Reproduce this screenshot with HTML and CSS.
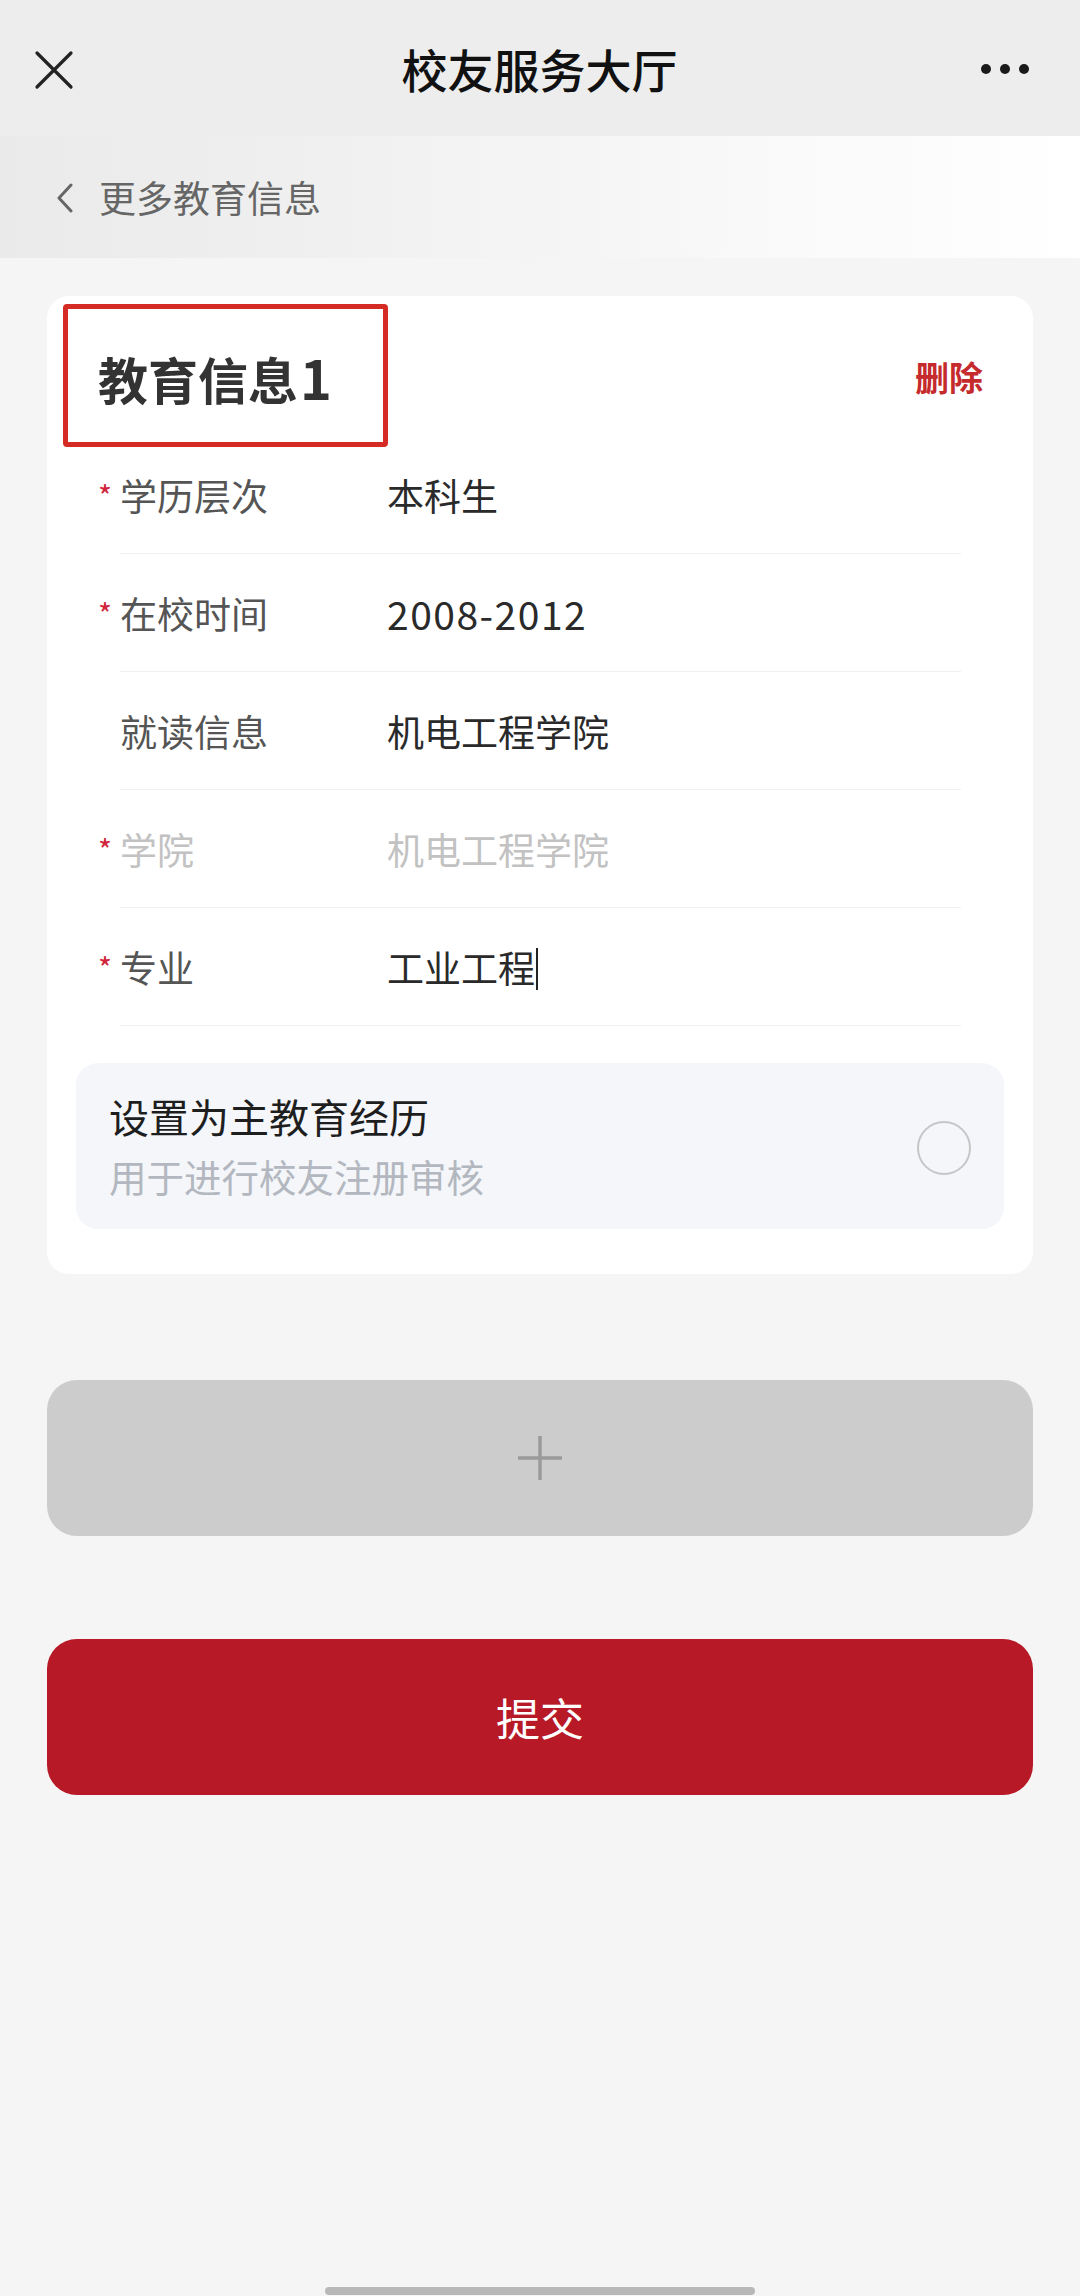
FILE: index.html
```html
<html>
<head>
<meta charset="utf-8">
<meta name="viewport" content="width=device-width, initial-scale=1">
<title>校友服务大厅</title>
<link rel="stylesheet" href="styles.css">
</head>
<body>

<div class="navbar">
	<svg class="nav-close" width="40" height="40" viewBox="0 0 40 40">
		<path d="M3 3 L37 37 M37 3 L3 37" stroke="#222" stroke-width="3.2" stroke-linecap="round" fill="none"/>
	</svg>
	<div class="nav-title">校友服务大厅</div>
	<div class="nav-more"><i></i><i></i><i></i></div>
</div>

<div class="subbar">
	<svg class="back" width="20" height="30" viewBox="0 0 20 30">
		<path d="M16 2 L4 15 L16 28" stroke="#666" stroke-width="3" fill="none" stroke-linecap="round" stroke-linejoin="round"/>
	</svg>
	<span>更多教育信息</span>
</div>

<div id="content">

	<div class="card">
		<div class="mark"></div>
		<div class="card-head">
			<div class="card-title">教育信息<span class="num">1</span></div>
			<div class="delete">删除</div>
		</div>

		<div class="row">
			<div class="label"><span class="req">*</span>学历层次</div>
			<div class="value">本科生</div>
		</div>
		<div class="row">
			<div class="label"><span class="req">*</span>在校时间</div>
			<div class="value digits">2008-2012</div>
		</div>
		<div class="row">
			<div class="label">就读信息</div>
			<div class="value">机电工程学院</div>
		</div>
		<div class="row disabled">
			<div class="label"><span class="req">*</span>学院</div>
			<div class="value">机电工程学院</div>
		</div>
		<div class="row">
			<div class="label"><span class="req">*</span>专业</div>
			<div class="value">工业工程<span class="caret"></span></div>
		</div>

		<div class="main-edu">
			<div>
				<div class="main-edu-title">设置为主教育经历</div>
				<div class="main-edu-sub">用于进行校友注册审核</div>
			</div>
			<div class="radio"></div>
		</div>
	</div>

	<div class="add-btn">
		<svg width="48" height="48" viewBox="0 0 48 48">
			<path d="M24 2 V46 M2 24 H46" stroke="#9a9a9a" stroke-width="3.5" fill="none"/>
		</svg>
	</div>

	<div class="submit-btn">提交</div>

</div>

<div class="home-bar"></div>

</body>
</html>
```

FILE: styles.css
```css
body {
	margin: 0;
	background-color: #f5f5f5;
	font-family: "Noto Sans CJK SC", "Noto Sans", sans-serif;
	min-height: 2296px;
	position: relative;
}

.navbar {
	height: 136px;
	background-color: #ededed;
	display: flex;
	align-items: center;
	justify-content: space-between;
	padding: 0 51px 0 34px;
}

.nav-close {
	margin-top: 3px;
}

.nav-title {
	font-size: 46px;
	font-weight: 500;
	color: #111;
	padding-left: 24px;
}

.nav-more {
	display: flex;
	gap: 9px;
	width: 48px;
	padding-top: 2px;
}

.nav-more i {
	width: 10px;
	height: 10px;
	border-radius: 50%;
	background-color: #1a1a1a;
}

.subbar {
	height: 122px;
	display: flex;
	align-items: center;
	padding-left: 55px;
	background: linear-gradient(to right, #eaeaea 0%, #f1f1f1 35%, #f9f9f9 70%, #ffffff 100%);
	color: #666;
	font-size: 37px;
}

.subbar .back {
	margin-right: 24px;
	margin-top: 2px;
}

#content {
	padding: 38px 47px 0 47px;
}

.card {
	position: relative;
	background-color: #fff;
	border-radius: 22px;
	padding: 0 0 45px 0;
}

/* red highlight frame over the heading */
.mark {
	position: absolute;
	left: 16px;
	top: 8px;
	width: 315px;
	height: 133px;
	border: 5px solid #d42b24;
	border-radius: 4px;
}

.card-head {
	display: flex;
	align-items: center;
	justify-content: space-between;
	height: 140px;
	padding: 0 50px 0 51px;
}

.card-title {
	font-size: 50px;
	font-weight: 700;
	color: #333;
	padding-top: 20px;
}

.card-title .num {
	font-size: 54px;
	margin-left: 2px;
}

.delete {
	font-size: 34px;
	font-weight: 700;
	color: #c52a2d;
	padding-top: 20px;
}

.row {
	display: flex;
	align-items: center;
	height: 117px;
	margin: 0 72px 0 73px;
	border-bottom: 1px solid #f0f0f0;
	font-size: 37px;
}

.label {
	width: 267px;
	color: #555;
	line-height: 58px;
}

.req {
	display: inline-block;
	width: 22px;
	margin-left: -22px;
	color: #d0253a;
	font-size: 30px;
	vertical-align: top;
	line-height: 58px;
}

.value {
	color: #2a2a2a;
	display: flex;
	align-items: center;
	line-height: 58px;
}

.value.digits {
	font-size: 39px;
	letter-spacing: 1.5px;
}

.disabled .label,
.disabled .value {
	color: #c2c2c2;
}

.caret {
	width: 2px;
	height: 42px;
	background-color: #222;
	margin-left: 1px;
	margin-top: 4px;
}

.main-edu {
	margin: 37px 29px 0 29px;
	height: 166px;
	background-color: #f4f6fa;
	border-radius: 22px;
	display: flex;
	align-items: center;
	justify-content: space-between;
	padding: 0 33px 0 33px;
}

.main-edu-title {
	font-size: 40px;
	color: #1e1e1e;
	line-height: 56px;
}

.main-edu-sub {
	font-size: 37.5px;
	color: #b3b7bf;
	line-height: 56px;
	margin-top: 4px;
}

.radio {
	width: 50px;
	height: 50px;
	border: 2px solid #c6c6c6;
	border-radius: 50%;
	margin-top: 4px;
}

.add-btn {
	margin-top: 106px;
	height: 156px;
	background-color: #cccccc;
	border-radius: 30px;
	display: flex;
	align-items: center;
	justify-content: center;
}

.submit-btn {
	margin-top: 103px;
	height: 156px;
	background-color: #b71926;
	border-radius: 30px;
	display: flex;
	align-items: center;
	justify-content: center;
	color: #fff;
	font-size: 44px;
}

.home-bar {
	position: absolute;
	bottom: 1px;
	left: 325px;
	width: 430px;
	height: 8px;
	border-radius: 4px;
	background-color: #b8b8b8;
}
```
